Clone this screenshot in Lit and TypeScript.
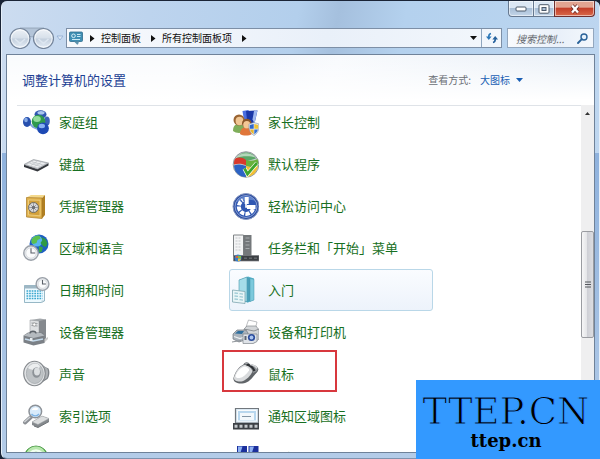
import { LitElement, html, svg, css, nothing } from "lit";
import { customElement, property } from "lit/decorators.js";
import { classMap } from "lit/directives/class-map.js";

const clock = (x: number, y: number, r: number) => svg`
  <circle cx=${x} cy=${y} r=${r} fill="#e9ecef" stroke="#9aa0a8" stroke-width="1.4"/>
  <circle cx=${x} cy=${y} r=${r - 2} fill="#fafbfc" stroke="#c9cdd2" stroke-width=".6"/>
  <path d="M${x} ${y - r + 2.5}V${y}H${x + r - 3}" fill="none" stroke="#5a6068" stroke-width="1.1"/>`;

const icons: Record<string, unknown> = {
  homegroup: svg`
    <ellipse cx="18.5" cy="6.500" rx="6" ry="4.200" fill="#2f56b0"/>
    <ellipse cx="19" cy="4.800" rx="3.600" ry="1.800" fill="#a9c4ee"/>
    <ellipse cx="25" cy="13" rx="2.800" ry="4.600" fill="#3b62b8"/>
    <path d="M7 15l4 4 7 3" fill="none" stroke="#7fa3dc" stroke-width="2"/>
    <ellipse cx="5" cy="14" rx="4" ry="5" fill="#2750ae"/>
    <ellipse cx="4" cy="12" rx="1.800" ry="2.200" fill="#86aae6"/>
    <circle cx="16.500" cy="13.500" r="6.800" fill="#2f9a4d"/>
    <ellipse cx="15" cy="11" rx="3.800" ry="3" fill="#93dc9c"/>
    <circle cx="21" cy="20.300" r="5.900" fill="#1d49b4"/>
    <ellipse cx="19.800" cy="18" rx="3.200" ry="2.200" fill="#88b0f2"/>`,
  keyboard: svg`
    <path d="M2 14.500L15.500 19l11-6v2.600L15.500 21.500 2 17z" fill="#34373c"/>
    <path d="M2 14.500L11.500 9.500 26.500 13 15.500 19z" fill="#c9ccd0" stroke="#8a8f95" stroke-width=".6"/>
    <path d="M5 14.400L12 10.700l11.500 2.600-7.800 4.200z" fill="#eceef0"/>
    <path d="M7.500 13.200l10.600 3M10 11.900l10.700 2.900M9 15.400l6-3.800M12.500 16.400l6.500-3.800" stroke="#b4b8bd" stroke-width=".6"/>`,
  vault: svg`
    <path d="M4.500 5.500L9 3h14l-3 3z" fill="#f4d98c"/>
    <path d="M20 6l3-3v20l-3 3.500z" fill="#b07f22"/>
    <path d="M4.500 5.500L20 6v20.500L4.500 25z" fill="#e0b24c" stroke="#a87a26" stroke-width=".7"/>
    <path d="M6.500 8l11.500.3v15.500L6.500 22.800z" fill="#d2a03a" stroke="#f3d994" stroke-width=".7"/>
    <circle cx="11.500" cy="15.500" r="5" fill="#d9dadc" stroke="#6f6a60" stroke-width="1"/>
    <circle cx="11.500" cy="15.500" r="1.700" fill="#5b5d62"/>
    <path d="M11.500 11v9M7 15.500h9M8.500 12.500l6 6M14.500 12.500l-6 6" stroke="#73757a" stroke-width=".6"/>`,
  region: svg`
    <circle cx="17" cy="10" r="9.500" fill="#1f5fc2"/>
    <circle cx="15" cy="7" r="5.500" fill="#58b4ee"/>
    <path d="M9.500 5.500c2-3 5-4.500 8-4l1 3-3 1.500-1 3-3 1-2-1z" fill="#5bbf4e"/>
    <path d="M19 3l4.500 2 2 4-1.500 4-3-1-2.500-3 2-3z" fill="#2f9a44"/>
    <path d="M17 12l4 1.500-1.500 4.500-3 .5z" fill="#3aa446"/>
    ${clock(9, 19, 7.2)}`,
  date: svg`
    <path d="M2.500 9.500h20V25l-3 1.500h-17z" fill="#eefaff" stroke="#7fa6b8" stroke-width=".8"/>
    <path d="M2.500 9.500h20v3h-20z" fill="#9fb7c4"/>
    <path d="M4.500 15h16M4.500 17.500h16M4.500 20h16M4.500 22.500h16" stroke="#3aa7cf" stroke-width="1.500" stroke-dasharray="1.700 .9"/>
    <path d="M19.500 26.500v-2h3z" fill="#b6ccd6"/>
    ${clock(20.5, 8, 6.4)}`,
  devices: svg`
    <path d="M8 2l10-1.500 6 1v19l-6 3-10-2z" fill="#a4a8ac"/>
    <path d="M8 2l9 1v20l-9-2z" fill="#dfe1e3" stroke="#8d9195" stroke-width=".5"/>
    <path d="M17 3l7-1.500v19L17 23z" fill="#85898e"/>
    <path d="M9.500 5l6 .5M9.500 7.500l6 .5" stroke="#9a9ea2"/>
    <circle cx="12.300" cy="6.500" r="1.600" fill="#fff" stroke="#777" stroke-width=".5"/>
    <path d="M21 22l5-3v2l-4 4z" fill="#ccc"/>
    <path d="M1.500 17.500L6 14.500h15l1.500 3V25l-11 2.500-10-3z" fill="#7b8086"/>
    <path d="M1.500 17.500l10 2.500 11-2.500L19 15H6.500z" fill="#b5babf"/>
    <path d="M8 15.500c0-3 6-3 6 0" fill="none" stroke="#5e646b" stroke-width="1.300"/>
    <path d="M3 21l8 2 10-2" fill="none" stroke="#c4daec" stroke-width="1.600"/>
    <path d="M8 20h2.500v3H8z" fill="#e9edf0"/>`,
  sound: svg`
    <path d="M15 2c4 2 8 5 11.500 6.500 1.500 3 1 8-1 10.500L15 25.500z" fill="#7d8287"/>
    <path d="M19 4l6.500 5c1 3 .5 6-.5 9l-5 3z" fill="#aeb2b6"/>
    <ellipse cx="12.500" cy="13.500" rx="10.800" ry="12.200" fill="#e2e4e6" stroke="#85898d" stroke-width="1.100"/>
    <ellipse cx="12.800" cy="13.500" rx="8.500" ry="10" fill="#bfc3c6" stroke="#a5a9ad" stroke-width=".8"/>
    <path d="M6 8c3-5 9-6 12-2-1 3-3 4-5 4s-5-.5-7-2z" fill="#eceeef"/>
    <ellipse cx="14.500" cy="12.500" rx="4.200" ry="5.300" fill="#8d9297"/>
    <ellipse cx="15" cy="11.500" rx="3" ry="3.900" fill="#dcdfe1"/>`,
  indexing: svg`
    <path d="M10 20L20 14l7 2.500v3L16 25.500l-6-2.500z" fill="#85898d"/>
    <path d="M10 20l10-6 7 2.500L16 22.500z" fill="#dcdedf" stroke="#9da1a4" stroke-width=".5"/>
    <path d="M12 24l4 1.500 11-6" fill="none" stroke="#6e7276"/>
    <path d="M3 20.500l6-5.500" stroke="#8b8f94" stroke-width="4" stroke-linecap="round"/>
    <path d="M2.800 19.800l5-4.500" stroke="#d0d3d6" stroke-width="1.400" stroke-linecap="round"/>
    <circle cx="13.300" cy="9.500" r="6.300" fill="#d8ebfb" stroke="#8d9298" stroke-width="1.500"/>
    <path d="M9.500 8.500c1-3 5-4 7-1.500-2 2-4 .5-7 1.500z" fill="#fff"/>
    <path d="M9.500 12c2 2.500 5.500 2.500 7.500 0" fill="none" stroke="#7db4e6" stroke-width="1.400"/>`,
  sync: svg`
    <circle cx="14" cy="14" r="12" fill="#4fae45" stroke="#3c8a3a" stroke-width=".8"/>
    <path d="M4 9.500c2-5 6-7 10-7s8 2 10 7c-6-3-14-3-20 0z" fill="#b9e8ae"/>
    <path d="M8 9.500c3-4 9-4 12 0" fill="none" stroke="#f3fff0" stroke-width="2.500"/>`,
  parental: svg`
    <path d="M11.500 3l6-1 2 11-6 3z" fill="#4a6fe0"/>
    <path d="M15 3l11.500-.5-3 13-7 1z" fill="#1a37a8"/>
    <path d="M23 3l3.500-.5-3 13-2-4z" fill="#9fb8f0"/>
    <path d="M2 23c0-6 3-7 6-7s6 2 6 7c-3 2.500-9 2.500-12 0z" fill="#7fae5a"/>
    <circle cx="8" cy="12" r="5.500" fill="#9a6432"/>
    <ellipse cx="8.500" cy="13" rx="3.900" ry="4.200" fill="#f0c693"/>
    <path d="M9 26c0-5 2.500-6.500 6-6.500s6 2 6 6.500c-3 2-9 2-12 0z" fill="#e0763a"/>
    <circle cx="15.800" cy="15.500" r="4.800" fill="#8a5628"/>
    <ellipse cx="15.800" cy="16.800" rx="3.600" ry="3.800" fill="#f3c795"/>
    <path d="M23 14.500l5 1.500c.5 6-1.500 9.500-5 11.500-3.500-2-5.500-5.500-5-11.500z" fill="#e8ecf2" stroke="#8795a8" stroke-width=".6"/>
    <path d="M22.700 16v4.800h-3.800c-.3-1.500-.2-2.500 0-3.700z" fill="#2f66cc"/>
    <path d="M23.300 16v4.800h3.800c.3-1.500.2-2.500 0-3.700z" fill="#f0c436"/>
    <path d="M22.700 21.400v4.800c-1.900-1.200-3-2.700-3.600-4.800z" fill="#e8b62c"/>
    <path d="M23.300 21.400v4.800c1.900-1.200 3-2.700 3.600-4.800z" fill="#3571d2"/>`,
  defaults: svg`
    <circle cx="15" cy="14.500" r="12.800" fill="#c7ccd0" stroke="#7f868c" stroke-width=".8"/>
    <path d="M5 9c2-4 6-6.500 10-6.500s8 2 10 6l-10 3z" fill="#5aa768"/>
    <path d="M4 9c2.500-2 7-2 11 1v5.500c-3-2-8-2.500-12-1 0-2 0-4 1-5.500z" fill="#d8392b"/>
    <path d="M3 15.500c4-1.500 8-1 12 .5V27c-4 0-8-2-10-5-1-1.500-1.800-4-2-6.500z" fill="#2c63c4"/>
    <path d="M15 10c4 1.500 8 1 11.500-1 1 3 1 5 .5 7-4 1.500-8 1.500-12 0z" fill="#68b13c"/>
    <path d="M15 16c4 1.500 8 1.500 12 0-1 6-5 10.500-12 11z" fill="#f2bf33"/>
    <path d="M5 8c4-5.500 14-7 19.500-.5C19 5.500 10 6 5 8z" fill="#fff" opacity=".55"/>
    <path d="M13.500 18.500l3 5.500L26 13" fill="none" stroke="#fff" stroke-width="4.200"/>
    <path d="M13.500 18.500l3 5.500L26 13" fill="none" stroke="#3fa52c" stroke-width="2.800"/>`,
  ease: svg`
    <circle cx="15" cy="14.500" r="13" fill="#2c4c9e" stroke="#8b9cc4" stroke-width="1"/>
    <circle cx="15" cy="14.500" r="11" fill="#2f57b2" stroke="#9fb3de" stroke-width=".8"/>
    <path d="M5.500 10c4-7 14-8 18.500-1.500-6-1.500-13-1-18.500 1.500z" fill="#7f9fdc" opacity=".6"/>
    <path d="M22 17a7.300 7.300 0 1 1-10-9" fill="none" stroke="#fff" stroke-width="4" stroke-dasharray="4.200 1.200"/>
    <path d="M13.700 5h4v7h-4zM16 13h8.500v4H16z" fill="#fff"/>
    <path d="M15 9v6h5" fill="none" stroke="#fff" stroke-width="1.600"/>`,
  taskbar: svg`
    <path d="M2.500 1h10v21h-10z" fill="#f3f4f5" stroke="#808487"/>
    <path d="M4.500 4h6M4.500 7h6M4.500 10h6M4.500 13h6M4.500 16h6" stroke="#c4c7c9" stroke-dasharray="2 1"/>
    <path d="M12.500 1h8v21h-8z" fill="#74787b"/>
    <path d="M14.500 4h4M14.500 7.500h4M14.500 11h4M14.500 14.500h4" stroke="#a6aaad"/>
    <path d="M2.500 21.500h25.500v5.500H2.500z" fill="#3c4044" stroke="#7c8084" stroke-width=".7"/>
    <circle cx="7" cy="24" r="3.500" fill="#357dcc"/>
    <path d="M4 23.500c1-2 2.500-2 3-1.500v2z" fill="#e8602c"/>
    <path d="M7 21.500c1 .5 2 .5 3 .5v2H7z" fill="#7cc243"/>
    <path d="M7 24.500h3c-.5 2-1.500 2.500-3 2.500z" fill="#f2c53b"/>
    <path d="M13 24.300h3M18 24.300h3M23 24.300h3" stroke="#64686c" stroke-width="1.600"/>`,
  start: svg`
    <path d="M8 4l9-3.500 6 2V24l-6 2.500-9-2z" fill="#56b3cb"/>
    <path d="M8 4l8-3v24.500l-8-1z" fill="#a5dde9" stroke="#4c97ab" stroke-width=".6"/>
    <path d="M16 1l3 1.500v22.500l-3 1.500z" fill="#4a9fb8"/>
    <path d="M19 2.500l4 .8V24l-4 1.500z" fill="#7cc9dc" stroke="#4796ad" stroke-width=".5"/>
    <path d="M1.500 14l12.500 1.500V27.500L1.500 26z" fill="#e9f5f7" stroke="#7ea6b0" stroke-width=".8"/>
    <path d="M3.500 17l3.500.4M3.500 20l3.500.4M3.500 23l3.500.4M8.500 17.700l3.500.4M8.500 20.700l3.500.4M8.500 23.700l3.500.4" stroke="#9fcbd5" stroke-width="1.300"/>`,
  printers: svg`
    <path d="M15 9l2.500-7L26 4l-2 8z" fill="#fff" stroke="#a0a4a8" stroke-width=".7"/>
    <path d="M13 11l3-3h9l3 4v9l-5 4-10-2z" fill="#d3d6d9" stroke="#888c90" stroke-width=".7"/>
    <path d="M13 11l10 2 5-2" fill="none" stroke="#8e9296"/>
    <path d="M2 16l4-4h9l2 3v6l-9 3-6-3z" fill="#aab3bc" stroke="#70767c" stroke-width=".7"/>
    <path d="M4 15.500l3-2.500h6l-2 3z" fill="#2f6f9e"/>
    <path d="M3 18.500l6 2 6-2" fill="none" stroke="#eef1f3" stroke-width="1.300"/>
    <path d="M12 16h14v7.500l-4 2H12z" fill="#dfe3e8" stroke="#7f858b" stroke-width=".7"/>
    <circle cx="20.500" cy="19.500" r="3.600" fill="#2b4c9c"/>
    <circle cx="20.500" cy="19.500" r="1.900" fill="#a9c5f0"/>
    <path d="M13.500 18h2v4h-2z" fill="#5c6470"/>
    <path d="M1 24l9-1.500" stroke="#8f9499"/>`,
  mouse: svg`
    <path d="M13 5c0-2.500 4-3 5-1" fill="none" stroke="#777b80" stroke-width="1.200"/>
    <path d="M2.500 18C4 12 8 6.500 12.500 4.500 18 2.500 26 5 27.300 9c.5 3-3 4.500-5 7.500-2.500 3.500-6 6.500-11 7-5 .4-9.500-1.500-8.800-5.500z" fill="#606468"/>
    <path d="M3 17.500C4.500 11.500 8.500 6.500 13 5c4-.5 8 2.500 8.500 6-1 4-6.500 9.500-11 10.500-4.500.5-8-1-7.500-4z" fill="#d9dbdd"/>
    <path d="M4.500 16c2-5.500 5.500-9 9.500-9.500 3 .5 4.500 2.500 4 4-2.500 4-6 7-9.500 7.500-2.500.2-4-.5-4-2z" fill="#fff"/>
    <path d="M14 4.500c4-1.500 11 1 12.500 4.500.5 2-2 3-4.500 4-1-4.500-4-7-8-8.500z" fill="#8d9195"/>
    <path d="M15.500 4.500c3 .5 6.500 3 8 6.500" fill="none" stroke="#2d3034" stroke-width="2.200"/>
    <path d="M19 4.500c3 .3 6 2 7 4" fill="none" stroke="#d6d8da" stroke-width="1.500"/>`,
  notify: svg`
    <path d="M4.500 6.500h23V21h-23z" fill="#dce9f3" stroke="#71777d" stroke-width="1.200"/>
    <path d="M6.500 8.500h19v10.500h-19z" fill="#b8d7ee" stroke="#f8fbfd" stroke-width="1"/>
    <path d="M9 11h14v7H9z" fill="#f2f8fc"/>
    <path d="M11 14.500h9" stroke="#8295a5"/>
    <path d="M2 21h26v6.500H2z" fill="#3c4045"/>
    <path d="M3.500 24.300h24" stroke="#c4c8cc" stroke-width="3" stroke-dasharray="3 2"/>`,
  network: svg`
    <path d="M6 2h10v9H6z" fill="#1b2f9c"/>
    <path d="M7 2.500l4.500 0-2 6H7z" fill="#8fb1f2"/>
    <path d="M17.500 2h10v9h-10z" fill="#1b2f9c"/>
    <path d="M18.500 2.500H23l-2 6h-2.500z" fill="#8fb1f2"/>`,
};

interface Entry {
  icon: string;
  label: string;
  hover?: boolean;
  marked?: boolean;
}

const entries: Entry[] = [
  { icon: "homegroup", label: "家庭组" },
  { icon: "parental", label: "家长控制" },
  { icon: "keyboard", label: "键盘" },
  { icon: "defaults", label: "默认程序" },
  { icon: "vault", label: "凭据管理器" },
  { icon: "ease", label: "轻松访问中心" },
  { icon: "region", label: "区域和语言" },
  { icon: "taskbar", label: "任务栏和「开始」菜单" },
  { icon: "date", label: "日期和时间" },
  { icon: "start", label: "入门", hover: true },
  { icon: "devices", label: "设备管理器" },
  { icon: "printers", label: "设备和打印机" },
  { icon: "sound", label: "声音" },
  { icon: "mouse", label: "鼠标", marked: true },
  { icon: "indexing", label: "索引选项" },
  { icon: "notify", label: "通知区域图标" },
  { icon: "sync", label: "同步中心" },
  { icon: "network", label: "网络和共享中心" },
];

@customElement("panel-item")
class PanelItem extends LitElement {
  @property({ attribute: false }) entry!: Entry;

  static styles = css`
    :host { display: block; }
    .item {
      position: relative;
      display: flex;
      align-items: center;
      gap: 9px;
      box-sizing: border-box;
      height: 42px;
      padding: 0 1px;
      border: 1px solid transparent;
      border-radius: 3px;
      color: #176f22;
      font-size: 13px;
      line-height: 20px;
      white-space: nowrap;
      text-decoration: none;
    }
    .hover {
      border-color: #b9d7e8;
      background: linear-gradient(#fafcff, #edf3fb);
    }
    .icon { width: 28px; height: 28px; flex: none; }
    .mark {
      position: absolute;
      left: -8px;
      top: -4px;
      width: 111px;
      height: 38px;
      border: 2px solid #d8383e;
      pointer-events: none;
    }
  `;

  render() {
    const { icon, label, hover, marked } = this.entry;
    return html`<a href="#" class=${classMap({ item: true, hover: !!hover })}>
      <svg class="icon" viewBox="0 0 28 28" aria-hidden="true">${icons[icon]}</svg>
      <span>${label}</span>
      ${marked ? html`<span class="mark"></span>` : nothing}
    </a>`;
  }
}

@customElement("app-root")
class AppRoot extends LitElement {
  static styles = css`
    :host {
      position: relative;
      display: block;
      box-sizing: border-box;
      height: 100vh;
      padding: 1px 0 0 1px;
      overflow: hidden;
      background: #1a2436;
      font-family: "Noto Sans CJK SC", sans-serif;
      font-size: 10px;
      line-height: 16px;
      color: #111;
    }
    button, input, select { font: inherit; color: inherit; margin: 0; padding: 0; border: 0; background: none; }
    .window {
      display: flex;
      flex-direction: column;
      box-sizing: border-box;
      height: 100%;
      padding: 0 4px 5px;
      border: 1px solid #e6eff9;
      border-top: 0;
      border-bottom-color: #7e93ae;
      border-radius: 6px;
      background:
        linear-gradient(#ffffff00 152px, #8fb2dd 152px, #b4cce8),
        linear-gradient(100deg, #ccdcf0 0%, #bdd4ee 22%, #b3cfec 44%, #a5c0de 50%, #b4d1ee 60%, #b9d4ef 80%, #c2d8f0 100%);
    }
    .caption { display: flex; justify-content: flex-end; height: 27px; }
    .caption button {
      display: grid;
      place-items: center;
      box-sizing: border-box;
      width: 25px;
      height: 16px;
      border: 1px solid #66788f;
      border-width: 0 0 1px 1px;
      background: linear-gradient(#dbe7f4 0 45%, #a9bfd7 50%, #c3d5e8);
      box-shadow: inset 0 0 0 1px #ffffff88;
    }
    .caption .min { width: 25px; border-radius: 0 0 0 4px; }
    .caption .max { width: 21px; }
    .caption .close {
      width: 41px;
      border-right-width: 1px;
      border-color: #6e2f2f;
      border-radius: 0 0 4px 0;
      background: linear-gradient(#e2a491 0 40%, #c4402a 50%, #d9694a);
    }
    .nav { display: flex; align-items: center; height: 20px; margin-bottom: 6px; }
    .travel { width: 45px; height: 22px; margin-left: 3px; flex: none; }
    .recent { width: 8px; margin: 0 2px; flex: none; }
    .address, .search {
      display: flex;
      align-items: center;
      box-sizing: border-box;
      height: 20px;
      border: 1px solid #7d8fa6;
      background: linear-gradient(90deg, #f8fafd, #e9f0f9 60%, #f3f7fc);
    }
    .address { flex: 1; min-width: 0; }
    .address .place { width: 14px; height: 14px; margin: 0 7px 0 2px; }
    .crumb { margin: 0 10px 0 6px; }
    .spacer { flex: 1; }
    .drop { width: 16px; height: 18px; display: grid; place-items: center; }
    .reload { width: 20px; height: 18px; border-left: 1px solid #8fa6bf; display: grid; place-items: center; }
    .search { width: 87px; margin: 0 1px 0 5px; padding: 0 5px 0 8px; border-color: #93a7be; }
    .search input { flex: 1; min-width: 0; height: 18px; font-style: italic; outline: 0; }
    .search input::placeholder { color: #65696f; opacity: 1; }
    .content {
      flex: 1;
      display: flex;
      flex-direction: column;
      min-height: 0;
      border: 1px solid #6f8299;
      background: #fff;
    }
    .head {
      display: flex;
      align-items: center;
      box-sizing: border-box;
      height: 50px;
      flex: none;
      padding: 0 71px 0 15px;
      background:
        linear-gradient(#ffffff00, #fff 90%),
        linear-gradient(110deg, #f9fbfd 0 30%, #f2f6fb 40%, #f8fafd 55%, #e8eff7);
    }
    .head h1 { flex: 1; margin: 0; font-size: 13px; line-height: 20px; font-weight: 400; color: #1c3f94; }
    .view { display: flex; align-items: center; color: #6b6f75; }
    .view select { appearance: none; width: 31px; margin: 0 5px 0 9px; color: #1a5fb4; }
    .body { display: flex; flex: 1; min-height: 0; }
    .pane {
      flex: 1;
      min-width: 0;
      margin-left: 10px;
      overflow: hidden;
      border-top: 1px solid #dfe3e8;
    }
    .grid {
      display: grid;
      grid-template-columns: 204px 204px;
      column-gap: 5px;
      margin: -5px 0 0 3px;
    }
    .bar { display: flex; flex-direction: column; width: 13px; background: #efeff0; }
    .bar .arrow { height: 16px; display: grid; place-items: center; flex: none; }
    .bar .before { flex: 110; }
    .bar .thumb {
      flex: 106;
      display: grid;
      place-items: center;
      border: 1px solid #9a9ca1;
      border-radius: 2px;
      box-sizing: border-box;
      background: linear-gradient(90deg, #f6f6f7, #e4e5e8 45%, #cfd0d6 50%, #dcdde1);
    }
    .bar .after { flex: 114; }
    .brand {
      position: absolute;
      right: 0;
      bottom: 0;
      display: flex;
      flex-direction: column;
      align-items: center;
      box-sizing: border-box;
      width: 184px;
      height: 79px;
      padding: 12px 4px 0 0;
      background: #3399ff;
      color: #000;
      font-family: "DejaVu Serif", serif;
    }
    .brand .big { font-size: 37px; line-height: 40px; -webkit-text-stroke: 1px #3399ff; }
    .brand .small { font-size: 18px; line-height: 18px; font-weight: 700; }
  `;

  render() {
    const chevron = svg`<path d="M0 0l4.500 3.500L0 7z" fill="#111"/>`;
    return html`
      <main class="window">
        <div class="caption">
          <button class="min" aria-label="最小化">
            <svg width="12" height="6"><rect x="1" y="1" width="10" height="4" rx="1" fill="#fff" stroke="#4d5a6b"/></svg>
          </button>
          <button class="max" aria-label="最大化">
            <svg width="12" height="10"><rect x="1" y=".7" width="10" height="8.500" rx="1" fill="#fff" stroke="#4d5a6b"/><rect x="4" y="3.500" width="4" height="3" fill="#aac0d8" stroke="#4d5a6b"/></svg>
          </button>
          <button class="close" aria-label="关闭">
            <svg width="12" height="10" viewBox="0 0 12 10"><path d="M3 1.500l6 7M9 1.500l-6 7" stroke="#6b2a25" stroke-width="3.800"/><path d="M3 1.500l6 7M9 1.500l-6 7" stroke="#fff" stroke-width="2.300"/></svg>
          </button>
        </div>
        <nav class="nav">
          <svg class="travel" viewBox="0 0 45 22" aria-hidden="true">
            <defs>
              <linearGradient id="orb" x2="0" y2="1">
                <stop offset="0" stop-color="#eef2f7"/><stop offset=".48" stop-color="#d7e0ea"/>
                <stop offset=".52" stop-color="#c3cfdd"/><stop offset="1" stop-color="#e6eef7"/>
              </linearGradient>
            </defs>
            <path d="M11 1h24v4q-6 0-8 4-4 2-8 0-2-4-8-4z" fill="#b3c4d8" stroke="#8798ae" stroke-width=".7"/>
            <circle cx="11" cy="11.500" r="10" fill="url(#orb)" stroke="#74849a" stroke-width="1.200"/>
            <circle cx="11" cy="11.500" r="8.600" fill="none" stroke="#fff" opacity=".7"/>
            <circle cx="34.500" cy="11.500" r="10" fill="url(#orb)" stroke="#74849a" stroke-width="1.200"/>
            <circle cx="34.500" cy="11.500" r="8.600" fill="none" stroke="#fff" opacity=".7"/>
            <path d="M6 12l5 4.500 5-4.500M29.500 12l5 4.500 5-4.500" fill="none" stroke="#dde6f0" stroke-width="1.600"/>
          </svg>
          <svg class="recent" height="6" viewBox="0 0 8 6"><path d="M1 1h6L4 5z" fill="#dfeaf6" stroke="#8fabd0" stroke-width=".8"/></svg>
          <div class="address">
            <svg class="place" viewBox="0 0 14 14" aria-hidden="true">
              <rect x=".5" y="1" width="13" height="9.500" rx="1" fill="#3f8fb4" stroke="#2d6c8e" stroke-width=".8"/>
              <circle cx="4.500" cy="4.800" r="1.800" fill="none" stroke="#d8f0f8"/>
              <path d="M8 3.500h3.500M8 5.500h3.500M3 8.500h8" stroke="#c8e8f4"/>
              <path d="M5 10.500h5l-1 3H8z" fill="#5d93ad"/>
            </svg>
            <svg width="5" height="7">${chevron}</svg>
            <button class="crumb">控制面板</button>
            <svg width="5" height="7">${chevron}</svg>
            <button class="crumb">所有控制面板项</button>
            <svg width="5" height="7">${chevron}</svg>
            <span class="spacer"></span>
            <button class="drop" aria-label="以前的位置"><svg width="7" height="4"><path d="M0 0h7L3.500 4z" fill="#111"/></svg></button>
            <button class="reload" aria-label="刷新">
              <svg width="12" height="12" viewBox="0 0 12 12"><path d="M5 1.500Q2.800 2 2.800 4.500V5" fill="none" stroke="#2d78b8" stroke-width="1.600"/><path d="M0 4.500h5.600L2.800 8z" fill="#2d78b8"/><path d="M7 10.500q2.200-.5 2.200-3V7" fill="none" stroke="#24609c" stroke-width="1.600"/><path d="M6.400 7.500H12L9.200 4z" fill="#24609c"/></svg>
            </button>
          </div>
          <div class="search">
            <input type="text" aria-label="搜索控制面板" placeholder="搜索控制..." />
            <svg width="11" height="11" viewBox="0 0 11 11" aria-hidden="true"><circle cx="7" cy="4" r="3" fill="#e6f1fb" stroke="#2a6299" stroke-width="1.400"/><path d="M4.800 6.200L1 10" stroke="#2a6299" stroke-width="1.900" stroke-linecap="round"/></svg>
          </div>
        </nav>
        <section class="content">
          <header class="head">
            <h1>调整计算机的设置</h1>
            <label class="view">查看方式:
              <select><option>大图标</option></select>
              <svg width="7" height="4" aria-hidden="true"><path d="M0 0h7L3.500 4z" fill="#1a5fb4"/></svg>
            </label>
          </header>
          <div class="body">
            <div class="pane">
              <div class="grid">${entries.map((e) => html`<panel-item .entry=${e}></panel-item>`)}</div>
            </div>
            <div class="bar" aria-hidden="true">
              <span class="arrow"><svg width="5" height="3"><path d="M0 3h5L2.500 0z" fill="#333"/></svg></span>
              <span class="before"></span>
              <span class="thumb"><svg width="6" height="7"><path d="M0 1h6M0 3.500h6M0 6h6" stroke="#55585d"/></svg></span>
              <span class="after"></span>
            </div>
          </div>
        </section>
      </main>
      <aside class="brand">
        <span class="big">TTEP.CN</span>
        <span class="small">ttep.cn</span>
      </aside>
    `;
  }
}
